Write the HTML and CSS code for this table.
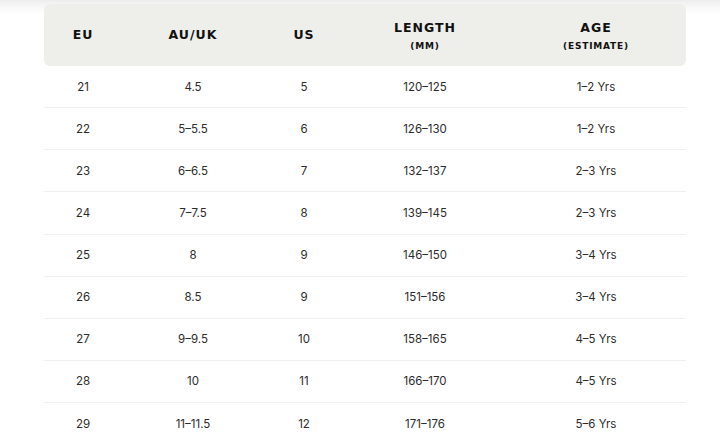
FILE: index.html
```html
<!DOCTYPE html>
<html>
<head>
<meta charset="utf-8">
<link rel="stylesheet" href="styles.css">
</head>
<body>
<div class="page">
  <table class="sizes">
    <colgroup>
      <col class="c1"><col class="c2"><col class="c3"><col class="c4"><col class="c5">
    </colgroup>
    <thead>
      <tr>
        <th>EU</th>
        <th>AU/UK</th>
        <th>US</th>
        <th class="two">LENGTH<span class="sub">(MM)</span></th>
        <th class="two">AGE<span class="sub">(ESTIMATE)</span></th>
      </tr>
    </thead>
    <tbody>
      <tr><td>21</td><td>4.5</td><td>5</td><td>120–125</td><td>1–2 Yrs</td></tr>
      <tr><td>22</td><td>5–5.5</td><td>6</td><td>126–130</td><td>1–2 Yrs</td></tr>
      <tr><td>23</td><td>6–6.5</td><td>7</td><td>132–137</td><td>2–3 Yrs</td></tr>
      <tr><td>24</td><td>7–7.5</td><td>8</td><td>139–145</td><td>2–3 Yrs</td></tr>
      <tr><td>25</td><td>8</td><td>9</td><td>146–150</td><td>3–4 Yrs</td></tr>
      <tr><td>26</td><td>8.5</td><td>9</td><td>151–156</td><td>3–4 Yrs</td></tr>
      <tr><td>27</td><td>9–9.5</td><td>10</td><td>158–165</td><td>4–5 Yrs</td></tr>
      <tr><td>28</td><td>10</td><td>11</td><td>166–170</td><td>4–5 Yrs</td></tr>
      <tr><td>29</td><td>11–11.5</td><td>12</td><td>171–176</td><td>5–6 Yrs</td></tr>
    </tbody>
  </table>
</div>
</body>
</html>
```
FILE: styles.css
```css
html, body {
  margin: 0;
  padding: 0;
}
body {
  width: 720px;
  height: 444px;
  overflow: hidden;
  background: linear-gradient(#ededed 0px, #f7f7f7 6px, #ffffff 14px);
  font-family: Inter, "Liberation Sans", sans-serif;
}
.page {
  padding: 4px 0 0 44px;
}
.sizes {
  width: 642px;
  border-collapse: separate;
  border-spacing: 0;
  table-layout: fixed;
}
.c1 { width: 78px; }
.c2 { width: 142px; }
.c3 { width: 80px; }
.c4 { width: 162px; }
.c5 { width: 180px; }
.sizes th {
  height: 62px;
  padding: 0;
  background: #eeeeea;
  font-family: "DejaVu Sans", sans-serif;
  font-weight: bold;
  font-size: 12.5px;
  letter-spacing: 1px;
  color: #111;
  text-align: center;
  vertical-align: middle;
  line-height: 18px;
}
.sizes th.two {
  height: 57px;
  padding-top: 5px;
}
.sizes th:first-child { border-radius: 6px 0 0 6px; }
.sizes th:last-child { border-radius: 0 6px 6px 0; }
.sub {
  display: block;
  font-size: 9px;
  letter-spacing: 0.8px;
  line-height: 19px;
}
.sizes td {
  height: 41.14px;
  padding: 0;
  border-bottom: 1px solid #f0f0ed;
  text-align: center;
  vertical-align: middle;
  font-size: 11.5px;
  color: #2b2b2b;
}
.sizes tr:last-child td {
  border-bottom: none;
}
```
